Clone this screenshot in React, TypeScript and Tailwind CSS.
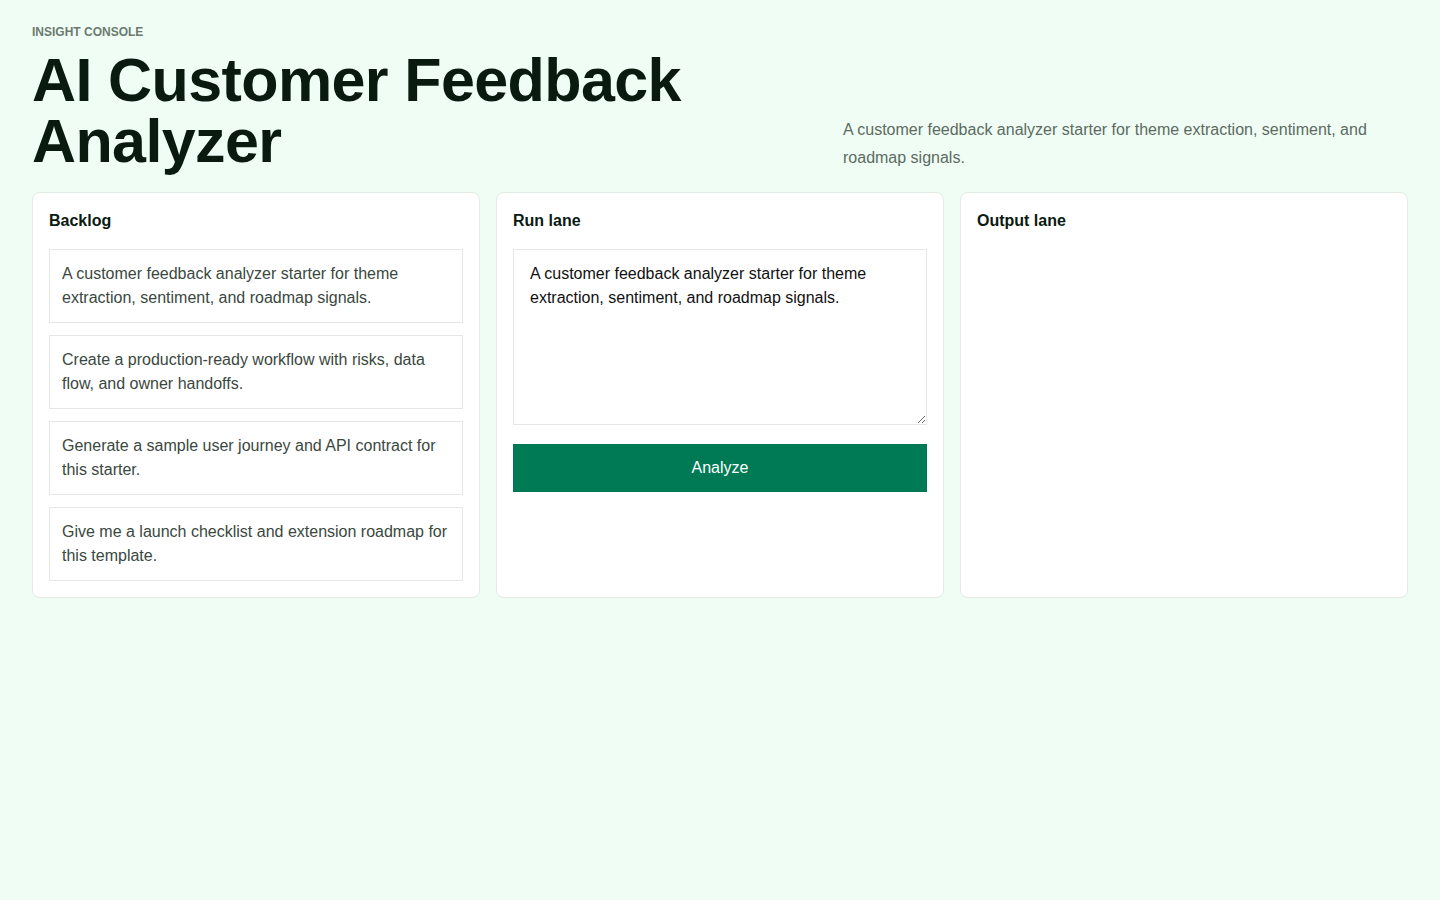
import { useState } from "react";

const PROMPTS = [
  "A customer feedback analyzer starter for theme extraction, sentiment, and roadmap signals.",
  "Create a production-ready workflow with risks, data flow, and owner handoffs.",
  "Generate a sample user journey and API contract for this starter.",
  "Give me a launch checklist and extension roadmap for this template.",
];

export default function App() {
  const [input, setInput] = useState(PROMPTS[0]);

  return (
    <div className="min-h-screen bg-[#f0fdf4] px-8 pt-6 pb-8 font-['Liberation_Sans',Arial,sans-serif] text-[#0b1a10]">
      <header className="mb-5 flex items-end justify-between">
        <div>
          <p className="mb-[10px] text-xs leading-4 font-bold uppercase text-[#6b7a70]">Insight console</p>
          <h1 className="text-[61px] leading-[1] font-bold tracking-[-0.01em] text-[#0a1a0f]">
            AI Customer Feedback
            <br />
            Analyzer
          </h1>
        </div>
        <p className="w-[565px] text-base leading-7 text-[#5c6b62]">
          A customer feedback analyzer starter for theme extraction, sentiment, and roadmap signals.
        </p>
      </header>

      <main className="grid grid-cols-3 gap-4">
        <section className="rounded-lg border border-[#e2ece5] bg-white p-4">
          <h2 className="mb-4 text-base leading-6 font-bold">Backlog</h2>
          <div className="flex flex-col gap-3">
            {PROMPTS.map((p) => (
              <button
                key={p}
                onClick={() => setInput(p)}
                className="border border-[#e5e9e6] bg-white px-3 py-3 text-left text-base leading-6 text-[#3a4840]"
              >
                {p}
              </button>
            ))}
          </div>
        </section>

        <section className="rounded-lg border border-[#e2ece5] bg-white p-4">
          <h2 className="mb-4 text-base leading-6 font-bold">Run lane</h2>
          <textarea
            value={input}
            onChange={(e) => setInput(e.target.value)}
            className="mb-[19px] block h-[176px] w-full border border-[#e5e9e6] px-4 py-3 text-base leading-6 text-[#111] outline-none"
          />
          <button className="h-12 w-full bg-[#007a55] text-base text-white">Analyze</button>
        </section>

        <section className="rounded-lg border border-[#e2ece5] bg-white p-4">
          <h2 className="text-base leading-6 font-bold">Output lane</h2>
        </section>
      </main>
    </div>
  );
}
